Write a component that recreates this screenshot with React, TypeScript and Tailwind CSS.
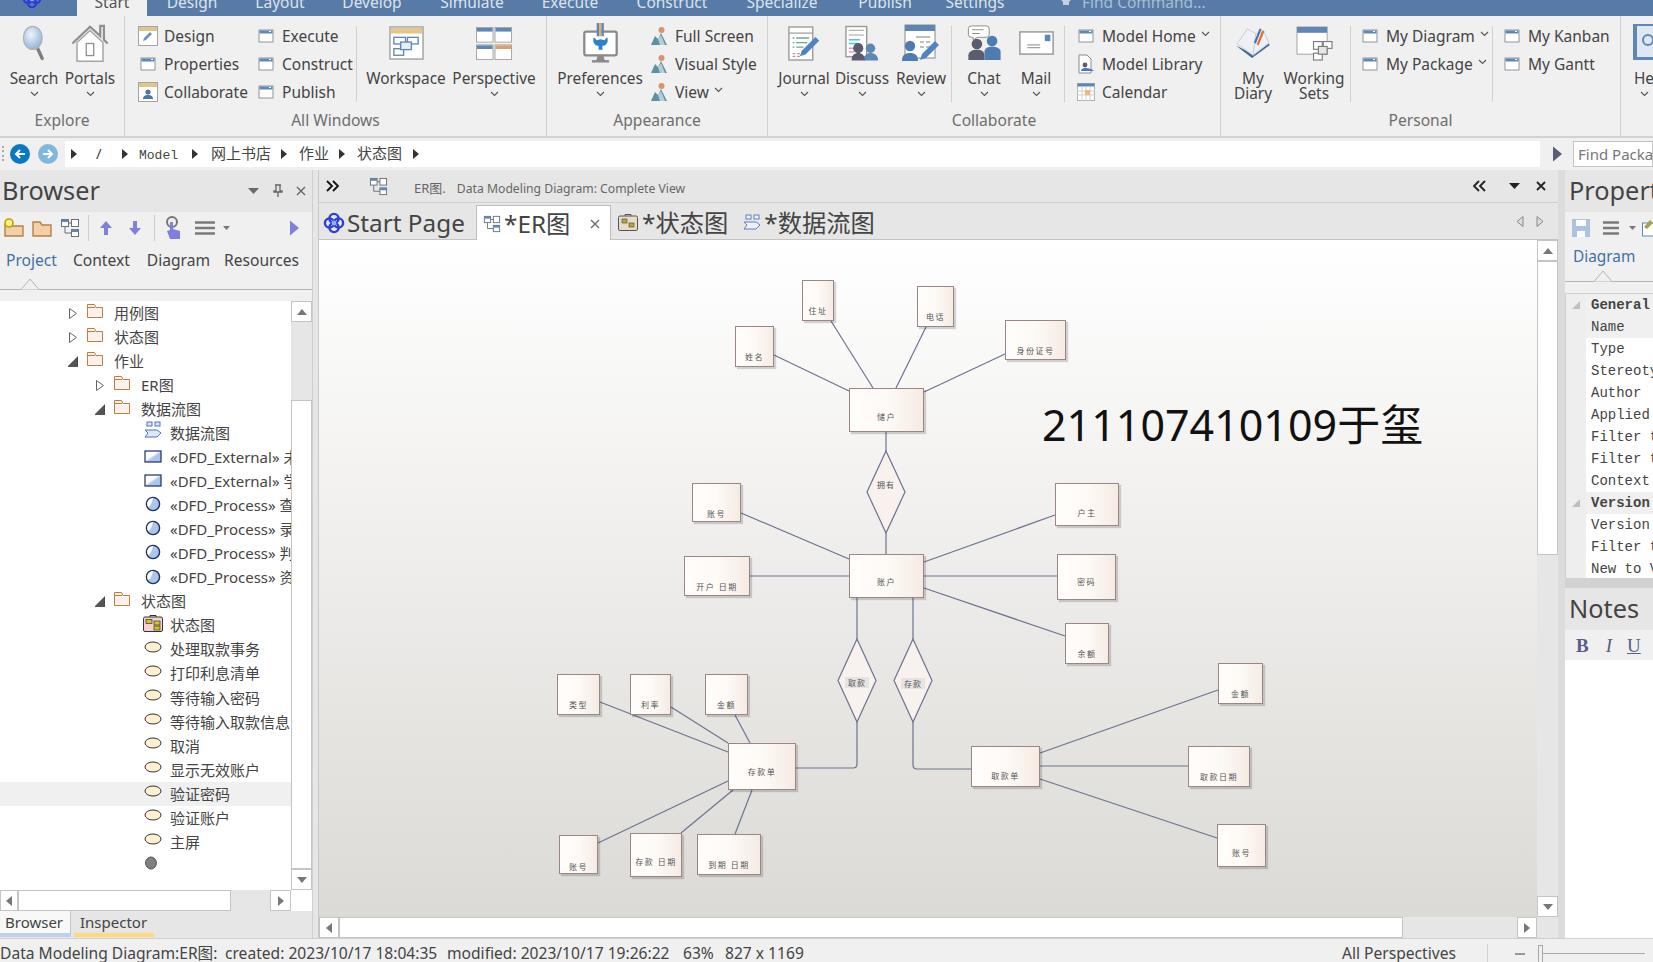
import { ReactNode } from "react";

/* ---------- small icons ---------- */

function Win() {
  return (
    <svg width="16" height="14" viewBox="0 0 16 14" className="shrink-0">
      <rect x="1" y="1" width="14" height="12" fill="#fff" stroke="#8d939b" />
      <rect x="1.5" y="1.5" width="13" height="3" fill="#5f87b5" />
      <rect x="11" y="2" width="2" height="1" fill="#fff" />
    </svg>
  );
}

function TanWin({ kind }: { kind: "pen" | "user" }) {
  return (
    <svg width="20" height="20" viewBox="0 0 20 20" className="shrink-0">
      <rect x="0.5" y="0.5" width="19" height="19" fill="#fff" stroke="#a3a3a3" />
      <rect x="1" y="1" width="18" height="4" fill="#e3c68e" />
      {kind === "pen" ? (
        <path d="M5 15l1-3 6-6 2 2-6 6z" fill="#6f93c4" />
      ) : (
        <>
          <circle cx="10" cy="10" r="2.6" fill="#4e74a8" />
          <path d="M5 17c0-3 2-4 5-4s5 1 5 4z" fill="#4e74a8" />
        </>
      )}
    </svg>
  );
}

function People() {
  return (
    <svg width="17" height="20" viewBox="0 0 17 20" className="shrink-0">
      <circle cx="10.5" cy="4" r="3" fill="#d8936a" />
      <path d="M0 19l4-9 3 3 3-6 6 12z" fill="#5b93a5" />
      <path d="M7 13l3-4 4 10H9z" fill="#fff" opacity="0.55" />
    </svg>
  );
}

function Chev() {
  return (
    <svg width="9" height="6" viewBox="0 0 9 6" className="shrink-0">
      <path d="M1 1l3.5 3.5L8 1" fill="none" stroke="#555" strokeWidth="1.1" />
    </svg>
  );
}

function Tri({ color = "#333", w = 6, h = 10 }: { color?: string; w?: number; h?: number }) {
  return (
    <svg width={w} height={h} viewBox="0 0 6 10" className="shrink-0">
      <path d="M0 0l6 5-6 5z" fill={color} />
    </svg>
  );
}

function Diagram({ size = 20, band = "#5f87b5" }: { size?: number; band?: string }) {
  return (
    <svg width={size} height={size} viewBox="0 0 20 20" className="shrink-0">
      <g fill="#fff" stroke="#6b6f78">
        <rect x="1.5" y="1.5" width="7" height="7" />
        <rect x="11.5" y="1.5" width="7" height="7" />
        <rect x="11.5" y="11.5" width="7" height="7" />
        <path d="M8.5 5h3M5 8.5V15h6.5" fill="none" />
      </g>
      <rect x="1.5" y="1.5" width="7" height="2.5" fill={band} />
      <rect x="11.5" y="11.5" width="7" height="2.5" fill={band} />
    </svg>
  );
}

function Logo({ size = 22 }: { size?: number }) {
  return (
    <svg width={size} height={size} viewBox="0 0 22 22" className="shrink-0">
      <g fill="none" stroke="#2b3fd6" strokeWidth="2.4">
        <circle cx="11" cy="6.5" r="4.6" />
        <circle cx="15.5" cy="11" r="4.6" />
        <circle cx="11" cy="15.5" r="4.6" />
        <circle cx="6.5" cy="11" r="4.6" />
      </g>
      <circle cx="11" cy="11" r="2.4" fill="#8fb0f0" />
    </svg>
  );
}

/* ---------- big ribbon icons ---------- */

const big: Record<string, ReactNode> = {
  search: (
    <svg width="29" height="36" viewBox="0 0 34 42">
      <defs>
        <radialGradient id="lens" cx="0.4" cy="0.35" r="0.7">
          <stop offset="0" stopColor="#eef5fc" />
          <stop offset="1" stopColor="#8fb2d6" />
        </radialGradient>
      </defs>
      <path d="M20 26l6 13" stroke="#7d7d7d" strokeWidth="4" strokeLinecap="round" />
      <ellipse cx="15" cy="15" rx="11" ry="13.5" fill="url(#lens)" stroke="#aab4bd" strokeWidth="1.5" />
    </svg>
  ),
  house: (
    <svg width="38" height="39" viewBox="0 0 40 42">
      <path d="M6 20v20h28V20L20 7z" fill="#fff" stroke="#a5a5a5" strokeWidth="1.6" />
      <path d="M1 21L20 3l11 10V2h4v15l4 4" fill="none" stroke="#8f8f8f" strokeWidth="2.4" />
      <rect x="16" y="21" width="8" height="13" fill="#fff" stroke="#8f8f8f" strokeWidth="1.4" />
    </svg>
  ),
  workspace: (
    <svg width="35" height="34" viewBox="0 0 36 36" preserveAspectRatio="none">
      <rect x="1" y="1" width="34" height="34" fill="#fff" stroke="#a3a3a3" strokeWidth="1.5" />
      <rect x="2" y="2" width="32" height="6" fill="#e3c68e" />
      <g fill="#fff" stroke="#5f87b5" strokeWidth="1.4">
        <rect x="5" y="12" width="12" height="7" />
        <rect x="19" y="12" width="11" height="7" />
        <rect x="5" y="24" width="10" height="7" />
        <rect x="12" y="17" width="11" height="8" fill="#e9eef5" />
      </g>
    </svg>
  ),
  perspective: (
    <svg width="37" height="33" viewBox="0 0 38 36" preserveAspectRatio="none">
      <g fill="#fff" stroke="#a5a5a5">
        <rect x="0.5" y="0.5" width="17" height="16" />
        <rect x="19.5" y="0.5" width="17" height="16" />
        <rect x="0.5" y="19.5" width="17" height="16" />
        <rect x="19.5" y="19.5" width="17" height="16" />
      </g>
      <rect x="1" y="1" width="16" height="4" fill="#5f87b5" />
      <rect x="20" y="1" width="16" height="4" fill="#5f87b5" />
      <rect x="1" y="20" width="16" height="4" fill="#5f87b5" />
      <rect x="20" y="20" width="16" height="4" fill="#d9a06b" />
    </svg>
  ),
  prefs: (
    <svg width="35" height="40" viewBox="0 0 36 42">
      <rect x="1" y="9" width="34" height="25" rx="2" fill="#fff" stroke="#8a8a8a" strokeWidth="2.4" />
      <path d="M13 41h10l-2-7h-6z" fill="#8a8a8a" />
      <rect x="9" y="39" width="18" height="2.5" fill="#8a8a8a" />
      <rect x="14" y="0" width="2.5" height="14" fill="#5f87b5" />
      <rect x="16.5" y="0" width="2.5" height="14" fill="#e0b060" />
      <rect x="19" y="0" width="2.5" height="14" fill="#5f87b5" />
      <path d="M11 15c-2 5 1 9 5 9v4h4v-4c4 0 7-4 5-9l-3 3-4-1-4 1z" fill="#2b7fd0" />
    </svg>
  ),
  journal: (
    <svg width="33" height="35" viewBox="0 0 36 38">
      <rect x="1" y="1" width="26" height="36" fill="#fff" stroke="#9a9a9a" strokeWidth="1.5" />
      <rect x="1.5" y="7" width="25" height="1.3" fill="#9a9a9a" />
      <path d="M5 13h2m2 0h14M5 18h2m2 0h12M5 23h2m2 0h8" stroke="#6fa58f" strokeWidth="1.4" />
      <path d="M5 30h3m2 0h3m2 0h3M5 33h3m2 0h3" stroke="#c98f8f" strokeWidth="1.4" />
      <path d="M13 33l2-6 15-15 4 4-15 15z" fill="#4e84c4" />
    </svg>
  ),
  discuss: (
    <svg width="34" height="37" viewBox="0 0 36 38">
      <rect x="1" y="1" width="22" height="32" fill="#fff" stroke="#9a9a9a" strokeWidth="1.5" />
      <path d="M4 5h16M4 10h16" stroke="#9a9a9a" />
      <path d="M4 15h12M4 19h10" stroke="#55c6d8" strokeWidth="1.4" />
      <path d="M4 24h6M4 28h6" stroke="#e49ac0" strokeWidth="1.4" />
      <circle cx="27" cy="24" r="5" fill="#5f87b5" />
      <path d="M20 37c0-6 3-8 7-8s8 2 8 8z" fill="#5f87b5" />
      <circle cx="14" cy="24" r="5.4" fill="#5c5c70" />
      <path d="M7 37c0-6 3-8 7-8s7 2 7 8z" fill="#5c5c70" />
    </svg>
  ),
  review: (
    <svg width="40" height="38" viewBox="0 0 40 38">
      <rect x="4" y="1" width="30" height="33" fill="#fff" stroke="#9a9a9a" strokeWidth="1.2" />
      <rect x="4" y="1" width="30" height="6" fill="#5f87b5" />
      <path d="M15 13h14M19 18h4m2 0h4M19 23h4m2 0h4" stroke="#a8a8a8" strokeWidth="1.3" />
      <circle cx="9" cy="22" r="5.2" fill="#4e7bb0" />
      <path d="M1 37c0-6 3-8 8-8s8 2 8 8z" fill="#4e7bb0" />
      <path d="M19 36l2-6 13-13 4 4-13 13z" fill="#4e84c4" />
    </svg>
  ),
  chat: (
    <svg width="35" height="36" viewBox="0 0 36 38">
      <path d="M4 1h16a3 3 0 013 3v6a3 3 0 01-3 3H10l-4 3v-3H4a3 3 0 01-3-3V4a3 3 0 013-3z" fill="#fff" stroke="#8a8a8a" />
      <path d="M5 5h12M5 9h8" stroke="#8a8a8a" />
      <circle cx="10" cy="20" r="5.6" fill="#5c5c70" />
      <path d="M1 37V32c0-4 4-6 9-6s8 2 8 6v5z" fill="#5c5c70" />
      <circle cx="26" cy="17" r="5.6" fill="#4e7bb0" />
      <path d="M18 37V28c0-3 3-5 8-5s9 2 9 5v9z" fill="#4e7bb0" />
    </svg>
  ),
  mail: (
    <svg width="37" height="24" viewBox="0 0 38 26">
      <rect x="1" y="1" width="36" height="24" fill="#fff" stroke="#9a9a9a" strokeWidth="1.6" />
      <rect x="28" y="4" width="6" height="7" fill="#5f87b5" />
      <path d="M9 15h14M9 18h14" stroke="#a3a3a3" strokeWidth="1.4" />
    </svg>
  ),
  diary: (
    <svg width="38" height="32" viewBox="0 0 38 34">
      <path d="M1 20l17 13 19-14-3-3-16 12z" fill="#3c6c9c" />
      <path d="M2 18L13 2l9 5 9-1 5 11-17 13z" fill="#eef0f6" stroke="#c9cbd8" />
      <path d="M22 7l-3 23" stroke="#c4c7d6" />
      <path d="M24 19l6-15" stroke="#d9733a" strokeWidth="2.4" />
      <path d="M21 17l6-15" stroke="#4a6ea8" strokeWidth="2.2" />
    </svg>
  ),
  sets: (
    <svg width="37" height="35" viewBox="0 0 38 36">
      <rect x="1" y="1" width="31" height="28" fill="#fff" stroke="#a3a3a3" />
      <rect x="1" y="1" width="31" height="6" fill="#5f87b5" />
      <g fill="#fff" stroke="#7d7d7d" strokeWidth="1.2">
        <rect x="18" y="16" width="9" height="8" />
        <rect x="28" y="16" width="9" height="7" />
        <rect x="18" y="28" width="9" height="7" />
        <rect x="23" y="21" width="9" height="8" fill="#e6e6e6" />
      </g>
    </svg>
  ),
  help: (
    <svg width="22" height="38" viewBox="0 0 22 38">
      <path d="M0 0h22v36H0z" fill="#5f87b5" />
      <rect x="4" y="2" width="18" height="31" fill="#dfe8f2" />
      <circle cx="15" cy="16" r="5" fill="none" stroke="#5f87b5" strokeWidth="2" />
    </svg>
  ),
};

/* ---------- ribbon ---------- */

function BigBtn({
  icon,
  label,
  width,
  chev = true,
}: {
  icon: string;
  label: ReactNode;
  width: string;
  chev?: boolean;
}) {
  return (
    <div className={`flex shrink-0 flex-col items-center pt-[7px] ${width}`}>
      <div className="flex h-10 items-center justify-center">{big[icon]}</div>
      <div className="mt-[5px] min-h-5 pt-[3px] text-center text-[15.4px] leading-[15px] whitespace-nowrap text-[#444]">{label}</div>
      {chev && (
        <div className="mt-[3px]">
          <Chev />
        </div>
      )}
    </div>
  );
}

function SmallBtn({ icon, text, chev }: { icon: ReactNode; text: string; chev?: boolean }) {
  return (
    <div className="flex h-7 items-center">
      <div className="flex w-5 shrink-0 justify-center">{icon}</div>
      <span className="ml-[6px] pt-[2px] text-[15.5px] whitespace-nowrap text-[#444]">{text}</span>
      {chev && (
        <span className="-mt-[5px] ml-[5px]">
          <Chev />
        </span>
      )}
    </div>
  );
}

function Col({ width, children }: { width: string; children: ReactNode }) {
  return <div className={`flex shrink-0 flex-col pt-[6px] ${width}`}>{children}</div>;
}

function Sep() {
  return <div className="mt-[10px] h-[76px] w-px shrink-0 bg-[#d0d0d0]" />;
}

function Group({
  width,
  title,
  children,
}: {
  width: string;
  title: string;
  children: ReactNode;
}) {
  return (
    <div className={`flex h-[120px] shrink-0 flex-col border-r border-[#d0d0d0] ${width}`}>
      <div className="flex h-[94px] items-start">{children}</div>
      <div className="h-5 text-center text-[15.6px] leading-5 whitespace-nowrap text-[#6e6e6e]">{title}</div>
    </div>
  );
}

function Ribbon() {
  return (
    <div className="flex h-[122px] shrink-0 border-b-2 border-[#d2d2d2] bg-[#f0f0f0]">
      <Group width="w-[125px]" title="Explore">
        <div className="w-[6px] shrink-0" />
        <BigBtn icon="search" label="Search" width="w-14" />
        <BigBtn icon="house" label="Portals" width="w-14" />
      </Group>
      <Group width="w-[422px]" title="All Windows">
        <div className="w-[13px] shrink-0" />
        <Col width="w-[118px]">
          <SmallBtn icon={<TanWin kind="pen" />} text="Design" />
          <SmallBtn icon={<Win />} text="Properties" />
          <SmallBtn icon={<TanWin kind="user" />} text="Collaborate" />
        </Col>
        <Col width="w-[100px]">
          <SmallBtn icon={<Win />} text="Execute" />
          <SmallBtn icon={<Win />} text="Construct" />
          <SmallBtn icon={<Win />} text="Publish" />
        </Col>
        <Sep />
        <div className="w-[7px] shrink-0" />
        <BigBtn icon="workspace" label="Workspace" width="w-[84px]" chev={false} />
        <BigBtn icon="perspective" label="Perspective" width="w-[92px]" />
      </Group>
      <Group width="w-[221px]" title="Appearance">
        <div className="w-3 shrink-0" />
        <BigBtn icon="prefs" label="Preferences" width="w-[82px]" />
        <div className="w-[8px] shrink-0" />
        <Col width="w-[110px]">
          <SmallBtn icon={<People />} text="Full Screen" />
          <SmallBtn icon={<People />} text="Visual Style" />
          <SmallBtn icon={<People />} text="View" chev />
        </Col>
      </Group>
      <Group width="w-[453px]" title="Collaborate">
        <div className="w-[7px] shrink-0" />
        <BigBtn icon="journal" label="Journal" width="w-[58px]" />
        <BigBtn icon="discuss" label="Discuss" width="w-[58px]" />
        <BigBtn icon="review" label="Review" width="w-[60px]" />
        <Sep />
        <div className="w-[6px] shrink-0" />
        <BigBtn icon="chat" label="Chat" width="w-[52px]" />
        <BigBtn icon="mail" label="Mail" width="w-[52px]" />
        <div className="w-[2px] shrink-0" />
        <Sep />
        <div className="w-[11px] shrink-0" />
        <Col width="w-[130px]">
          <SmallBtn icon={<Win />} text="Model Home" chev />
          <SmallBtn
            icon={
              <svg width="18" height="20" viewBox="0 0 18 20">
                <path d="M2 1h8l4 4v14H2z" fill="#fff" stroke="#8a8a8a" />
                <circle cx="8" cy="11" r="2.4" fill="#5c5c70" />
                <path d="M4 17c0-2 2-3 4-3s6 0 9 3z" fill="#4e7bb0" />
              </svg>
            }
            text="Model Library"
          />
          <SmallBtn
            icon={
              <svg width="18" height="18" viewBox="0 0 18 18">
                <rect x="0.5" y="0.5" width="17" height="17" fill="#fff" stroke="#b0b0b0" />
                <rect x="0.5" y="0.5" width="17" height="3" fill="#5f87b5" />
                <path d="M0 8h18M0 12h18M5 4v14M9 4v14M13 4v14" stroke="#d0d0d0" />
                <rect x="8" y="7" width="5" height="5" fill="#f0b878" />
              </svg>
            }
            text="Calendar"
          />
        </Col>
      </Group>
      <Group width="w-[400px]" title="Personal">
        <div className="w-[4px] shrink-0" />
        <BigBtn icon="diary" label={<>My<br />Diary</>} width="w-14" chev={false} />
        <BigBtn icon="sets" label={<>Working<br />Sets</>} width="w-[66px]" chev={false} />
        <div className="w-[3px] shrink-0" />
        <Sep />
        <div className="w-[9px] shrink-0" />
        <Col width="w-[130px]">
          <SmallBtn icon={<Win />} text="My Diagram" chev />
          <SmallBtn icon={<Win />} text="My Package" chev />
        </Col>
        <div className="ml-[2px]">
          <Sep />
        </div>
        <div className="w-[9px] shrink-0" />
        <Col width="w-[120px]">
          <SmallBtn icon={<Win />} text="My Kanban" />
          <SmallBtn icon={<Win />} text="My Gantt" />
        </Col>
      </Group>
      <div className="pl-[16px]">
        <BigBtn icon="help" label="He" width="w-[14px]" />
      </div>
    </div>
  );
}

function TitleBar() {
  const tabs = [
    ["Design", "w-[90px]"],
    ["Layout", "w-[86px]"],
    ["Develop", "w-[98px]"],
    ["Simulate", "w-[102px]"],
    ["Execute", "w-[94px]"],
    ["Construct", "w-[110px]"],
    ["Specialize", "w-[110px]"],
    ["Publish", "w-[96px]"],
    ["Settings", "w-[84px]"],
  ];
  return (
    <div className="flex h-4 shrink-0 items-start overflow-hidden bg-[#577ba6] text-[15.5px] leading-5">
      <div className="-mt-[11px] flex w-[77px] justify-center pr-[14px]">
        <Logo size={20} />
      </div>
      <div className="-mt-[8px] h-[30px] w-[70px] bg-[#f0f0f0] text-center text-[#555]">Start</div>
      {tabs.map(([t, w]) => (
        <div key={t} className={`-mt-[8px] text-center text-[#dbe4ee] ${w}`}>
          {t}
        </div>
      ))}
      <div className="-mt-[8px] flex items-center pl-[43px] text-[#a9bdd3]">
        <svg width="12" height="20" viewBox="0 0 12 20">
          <path d="M6 0a5 5 0 00-3 9v3h6V9a5 5 0 00-3-9z" transform="translate(0 1)" fill="#c2d0e0" />
        </svg>
        <span className="ml-[10px]">Find Command...</span>
      </div>
    </div>
  );
}

function Crumb({ pad, width, children }: { pad: string; width: string; children: ReactNode }) {
  return (
    <>
      <Tri />
      <div className={`shrink-0 whitespace-nowrap ${pad} ${width}`}>{children}</div>
    </>
  );
}

function Breadcrumb() {
  return (
    <div className="flex h-[29px] shrink-0 items-center bg-[#f0f0f0] pt-[2px]">
      <div className="ml-[2px] flex h-4 w-[3px] flex-col justify-between">
        <i className="h-[2px] w-[2px] bg-[#aaa]" />
        <i className="h-[2px] w-[2px] bg-[#aaa]" />
        <i className="h-[2px] w-[2px] bg-[#aaa]" />
        <i className="h-[2px] w-[2px] bg-[#aaa]" />
      </div>
      <svg width="20" height="20" viewBox="0 0 20 20" className="ml-[5px]">
        <circle cx="10" cy="10" r="10" fill="#0a78c2" />
        <path d="M15 10H6m4-4l-4 4 4 4" fill="none" stroke="#fff" strokeWidth="2" />
      </svg>
      <svg width="20" height="20" viewBox="0 0 20 20" className="ml-[8px]">
        <circle cx="10" cy="10" r="10" fill="#7fb8dc" />
        <path d="M5 10h9m-4-4l4 4-4 4" fill="none" stroke="#fff" strokeWidth="2" />
      </svg>
      <div className="ml-[7px] flex h-[26px] w-[1475px] shrink-0 items-center bg-white pl-[6px] text-[15px] text-[#444]">
        <Crumb pad="pl-[19px]" width="w-[45px]">/</Crumb>
        <Crumb pad="pl-[11px]" width="w-[64px]">
          <span className="font-['Liberation_Mono',monospace] text-[13px]">Model</span>
        </Crumb>
        <Crumb pad="pl-[13px]" width="w-[83px]">网上书店</Crumb>
        <Crumb pad="pl-[12px]" width="w-[52px]">作业</Crumb>
        <Crumb pad="pl-[12px]" width="w-[68px]">状态图</Crumb>
        <Tri />
      </div>
      <div className="ml-[13px]">
        <Tri color="#5a5d78" w={9} h={16} />
      </div>
      <div className="ml-[11px] h-[26px] flex-1 overflow-hidden border border-[#c4c4c4] bg-white pl-[4px] text-[15px] leading-6 whitespace-nowrap text-[#777]">
        Find Package
      </div>
    </div>
  );
}

/* ---------- left browser panel ---------- */

function Folder({ fill = "#fdf1ea" }: { fill?: string }) {
  return (
    <svg width="16" height="15" viewBox="0 0 16 15" className="shrink-0 -translate-y-[3px]">
      <path d="M.5 14.5v-13h7l1.5 3h6.5v10z" fill={fill} stroke="#b97f45" />
      <path d="M1 4.5h7" stroke="#b97f45" />
    </svg>
  );
}

const leafIcons: Record<string, ReactNode> = {
  flow: (
    <svg width="18" height="18" viewBox="0 0 18 18" className="-translate-y-[3px]">
      <g fill="#dfe8f7" stroke="#4d6fc0">
        <rect x="3" y="1" width="5" height="4" />
        <rect x="11" y="1" width="5" height="4" />
        <path d="M1 9h12l4 3-4 4H1l3-4z" />
      </g>
    </svg>
  ),
  ext: (
    <svg width="18" height="13" viewBox="0 0 18 13" className="-translate-y-[1px]">
      <defs>
        <linearGradient id="ex" x1="0" y1="0" x2="1" y2="1">
          <stop offset="0.42" stopColor="#fff" />
          <stop offset="0.58" stopColor="#a9c6ee" />
        </linearGradient>
      </defs>
      <rect x="1" y="1" width="16" height="11" fill="url(#ex)" stroke="#1f2f5a" strokeWidth="1.2" />
    </svg>
  ),
  proc: (
    <svg width="16" height="16" viewBox="0 0 16 16" className="-translate-y-[1px]">
      <circle cx="8" cy="8" r="6.6" fill="#a9c6ee" stroke="#1f2f5a" strokeWidth="1.4" />
      <path d="M8 2a6 6 0 00-5 9c3-1 4-5 5-9z" fill="#fff" />
    </svg>
  ),
  state: (
    <svg width="20" height="17" viewBox="0 0 20 17" className="-translate-y-[2px]">
      <rect x="0.5" y="2" width="19" height="14.5" rx="1.5" fill="#f6d3d3" stroke="#333" />
      <path d="M7 2V.5h6V2" fill="none" stroke="#333" />
      <rect x="3" y="4.5" width="6" height="4" fill="#d4c42a" stroke="#333" strokeWidth="0.7" />
      <rect x="11" y="6" width="6" height="4" fill="#d4c42a" stroke="#333" strokeWidth="0.7" />
      <rect x="11" y="11" width="6" height="4" fill="#d4c42a" stroke="#333" strokeWidth="0.7" />
    </svg>
  ),
  oval: (
    <svg width="18" height="12" viewBox="0 0 18 12" className="-translate-y-[3px]">
      <ellipse cx="9" cy="6" rx="8" ry="5" fill="#fdf0d0" stroke="#333" />
    </svg>
  ),
  dot: (
    <svg width="18" height="14" viewBox="0 0 18 14" className="-translate-y-[3px] -translate-x-[2px]">
      <ellipse cx="9" cy="7" rx="5.4" ry="6" fill="#808080" stroke="#555" />
    </svg>
  ),
};

type Row = { text: string; level: 0 | 1 | 2; open?: boolean; icon?: string; active?: boolean };

const rows: Row[] = [
  { text: "用例图", level: 0 },
  { text: "状态图", level: 0 },
  { text: "作业", level: 0, open: true },
  { text: "ER图", level: 1 },
  { text: "数据流图", level: 1, open: true },
  { text: "数据流图", level: 2, icon: "flow" },
  { text: "«DFD_External» 未注册用户", level: 2, icon: "ext" },
  { text: "«DFD_External» 学生用户", level: 2, icon: "ext" },
  { text: "«DFD_Process» 查询", level: 2, icon: "proc" },
  { text: "«DFD_Process» 录入", level: 2, icon: "proc" },
  { text: "«DFD_Process» 判断", level: 2, icon: "proc" },
  { text: "«DFD_Process» 资料", level: 2, icon: "proc" },
  { text: "状态图", level: 1, open: true },
  { text: "状态图", level: 2, icon: "state" },
  { text: "处理取款事务", level: 2, icon: "oval" },
  { text: "打印利息清单", level: 2, icon: "oval" },
  { text: "等待输入密码", level: 2, icon: "oval" },
  { text: "等待输入取款信息", level: 2, icon: "oval" },
  { text: "取消", level: 2, icon: "oval" },
  { text: "显示无效账户", level: 2, icon: "oval" },
  { text: "验证密码", level: 2, icon: "oval", active: true },
  { text: "验证账户", level: 2, icon: "oval" },
  { text: "主屏", level: 2, icon: "oval" },
  { text: "", level: 2, icon: "dot" },
];

function Twisty({ open }: { open?: boolean }) {
  return (
    <svg width="10" height="11" viewBox="0 0 10 11" className="shrink-0">
      {open ? (
        <path d="M0 10.5h10V.5z" fill="#555" stroke="#222" strokeWidth="0.6" />
      ) : (
        <path d="M1.5.5l7 5-7 5z" fill="#fff" stroke="#666" />
      )}
    </svg>
  );
}

function TreeRow({ row }: { row: Row }) {
  const pad = { 0: "pl-[68px]", 1: "pl-[95px]", 2: "pl-[143px]" }[row.level];
  return (
    <div
      className={`flex h-[24.05px] w-[291px] items-center overflow-hidden whitespace-nowrap text-[15px] text-[#444] ${pad} ${
        row.active ? "bg-[#f0f0f0]" : ""
      }`}
    >
      {row.level === 2 ? (
        <>
          <div className="flex w-[20px] shrink-0 justify-center">{row.icon ? leafIcons[row.icon] : null}</div>
          <span className="ml-[7px]">{row.text}</span>
        </>
      ) : (
        <>
          <Twisty open={row.open} />
          <span className="ml-[9px]">
            <Folder />
          </span>
          <span className="ml-[11px]">{row.text}</span>
        </>
      )}
    </div>
  );
}

function ScrollBtn({ dir, className = "" }: { dir: "up" | "down" | "left" | "right"; className?: string }) {
  const d = { up: "M1 9L6 3l5 6z", down: "M1 3l5 6 5-6z", left: "M9 1L3 6l6 5z", right: "M3 1l6 5-6 5z" }[dir];
  return (
    <div className={`flex shrink-0 items-center justify-center border border-[#c4c4c4] bg-white ${className}`}>
      <svg width="12" height="12" viewBox="0 0 12 12">
        <path d={d} fill="#777" />
      </svg>
    </div>
  );
}

function PaneHead({ title, pad = "ml-[2px]", right }: { title: string; pad?: string; right?: ReactNode }) {
  return (
    <div className="flex h-[42px] shrink-0 items-center overflow-hidden bg-[#e6e6e6]">
      <span className={`text-[25.3px] whitespace-nowrap text-[#444] ${pad}`}>{title}</span>
      {right}
    </div>
  );
}

function Menu() {
  return (
    <svg width="20" height="14" viewBox="0 0 20 14" className="shrink-0">
      <path d="M0 1.5h20M0 7h20M0 12.5h20" stroke="#7a7a7a" strokeWidth="2.4" />
    </svg>
  );
}

function MiniDown() {
  return (
    <svg width="7" height="4" viewBox="0 0 7 4" className="shrink-0">
      <path d="M0 0h7L3.5 4z" fill="#777" />
    </svg>
  );
}

function Notch({ left }: { left: string }) {
  return (
    <svg width="20" height="12" viewBox="0 0 20 12" className={`absolute -bottom-px ${left}`}>
      <path d="M0 11.5h1L10 1l9 10.5h1" fill="#f0f0f0" stroke="#b5b5b5" />
    </svg>
  );
}

function Browser() {
  return (
    <div className="flex w-[312px] shrink-0 flex-col">
      <PaneHead
        title="Browser"
        right={
          <div className="ml-[148px] flex items-center">
            <svg width="11" height="6" viewBox="0 0 11 6">
              <path d="M0 0h11L5.5 6z" fill="#6a6a6a" />
            </svg>
            <svg width="12" height="14" viewBox="0 0 12 14" className="ml-[13px]">
              <path d="M3 1h6M4 1v6H2v1h8V7H8V1M6 8v5" fill="none" stroke="#666" strokeWidth="1.3" />
            </svg>
            <svg width="10" height="10" viewBox="0 0 10 10" className="ml-[12px]">
              <path d="M1 1l8 8M9 1l-8 8" stroke="#666" strokeWidth="1.4" />
            </svg>
          </div>
        }
      />
      <div className="flex h-[31px] shrink-0 items-center bg-[#f0f0f0] pl-[4px]">
        <svg width="20" height="20" viewBox="0 0 20 20">
          <path d="M1 18V6h6l1.5 2H19v10z" fill="#f2cfa6" stroke="#b97f45" strokeWidth="1.4" />
          <circle cx="5" cy="5" r="4" fill="#f7f28a" stroke="#c2a000" strokeWidth="1.6" />
        </svg>
        <svg width="20" height="18" viewBox="0 0 20 18" className="ml-[8px]">
          <path d="M1 17V3h7l2 3h9v11z" fill="#f2cfa6" stroke="#b97f45" strokeWidth="1.4" />
        </svg>
        <div className="ml-[8px]">
          <Diagram />
        </div>
        <div className="ml-[8px] h-[26px] w-px bg-[#ccc]" />
        <svg width="14" height="16" viewBox="0 0 14 16" className="ml-[10px]">
          <path d="M7 1l6 7H9v7H5V8H1z" fill="#7f7fdf" />
        </svg>
        <svg width="14" height="16" viewBox="0 0 14 16" className="ml-[15px]">
          <path d="M7 15L1 8h4V1h4v7h4z" fill="#7f7fdf" />
        </svg>
        <div className="ml-[12px] h-[26px] w-px bg-[#ccc]" />
        <svg width="16" height="24" viewBox="0 0 16 24" className="ml-[10px]">
          <circle cx="7" cy="6" r="5" fill="none" stroke="#777" strokeWidth="2" />
          <path d="M5 6v8l-3 1 3 8h10v-8l-7-2V6z" fill="#7f7fdf" />
        </svg>
        <div className="ml-[14px]">
          <Menu />
        </div>
        <div className="ml-[8px]">
          <MiniDown />
        </div>
        <div className="ml-[60px]">
          <Tri color="#7f7fdf" w={9} h={16} />
        </div>
      </div>
      <div className="relative flex h-[47px] shrink-0 items-start border-b border-[#b5b5b5] bg-[#f0f0f0] pt-[6px] text-[15.6px] text-[#444]">
        <span className="ml-[6px] text-[#3f70a6]">Project</span>
        <span className="ml-[16px]">Context</span>
        <span className="ml-[17px]">Diagram</span>
        <span className="ml-[14px]">Resources</span>
        <Notch left="left-[20px]" />
      </div>
      <div className="h-[11px] shrink-0 bg-[#f0f0f0]" />
      <div className="flex h-[589px] shrink-0 bg-white">
        <div className="w-[291px] shrink-0">
          {rows.map((r, i) => (
            <TreeRow key={i} row={r} />
          ))}
        </div>
        <div className="flex w-[21px] shrink-0 flex-col bg-[#e6e6e6]">
          <ScrollBtn dir="up" className="h-[21px]" />
          <div className="h-[78px]" />
          <div className="flex-1 border border-[#c4c4c4] bg-white" />
          <ScrollBtn dir="down" className="h-[21px]" />
        </div>
      </div>
      <div className="flex h-[21px] shrink-0 bg-[#e6e6e6]">
        <ScrollBtn dir="left" className="w-[18px]" />
        <div className="w-[213px] border border-[#c4c4c4] bg-white" />
        <div className="w-[39px]" />
        <ScrollBtn dir="right" className="w-[21px]" />
        <div className="flex-1 bg-white" />
      </div>
      <div className="flex h-[27px] shrink-0 items-start bg-[#e6e6e6] text-[15px] leading-[20px] text-[#444]">
        <div className="h-[26px] w-[71px] border-r border-b-[4px] border-r-[#c4c4c4] border-b-[#c0d0f0] bg-[#f8f8f8] pl-[5px] pt-px">Browser</div>
        <div className="ml-[3px] h-[26px] w-[80px] border-b-[4px] border-[#ffd878] pl-[6px] pt-px">Inspector</div>
      </div>
    </div>
  );
}

/* ---------- diagram ---------- */

// page coordinates, shifted by the canvas origin when drawn
const OX = 319;
const OY = 239;

const nodes = [
  { x: 802, y: 279, w: 32, h: 41, t: "住址", ly: 310 },
  { x: 917, y: 285, w: 37, h: 41, t: "电话", ly: 316 },
  { x: 1005, y: 319, w: 61, h: 40, t: "身份证号", ly: 350 },
  { x: 735, y: 325, w: 39, h: 41, t: "姓名", ly: 356 },
  { x: 849, y: 387, w: 75, h: 44, t: "储户", ly: 416 },
  { x: 692, y: 482, w: 49, h: 39, t: "账号", ly: 513 },
  { x: 684, y: 555, w: 66, h: 40, t: "开户 日期", ly: 586 },
  { x: 849, y: 553, w: 75, h: 44, t: "账户", ly: 581 },
  { x: 1055, y: 482, w: 64, h: 43, t: "户主", ly: 512 },
  { x: 1057, y: 553, w: 59, h: 46, t: "密码", ly: 581 },
  { x: 1065, y: 622, w: 44, h: 41, t: "余额", ly: 653 },
  { x: 557, y: 673, w: 43, h: 41, t: "类型", ly: 704 },
  { x: 630, y: 673, w: 41, h: 41, t: "利率", ly: 704 },
  { x: 705, y: 673, w: 43, h: 41, t: "金额", ly: 704 },
  { x: 728, y: 742, w: 68, h: 47, t: "存款单", ly: 771 },
  { x: 971, y: 745, w: 69, h: 41, t: "取款单", ly: 775 },
  { x: 1188, y: 745, w: 62, h: 41, t: "取款日期", ly: 776 },
  { x: 1218, y: 662, w: 45, h: 41, t: "金额", ly: 693 },
  { x: 1217, y: 823, w: 49, h: 43, t: "账号", ly: 852 },
  { x: 559, y: 834, w: 39, h: 39, t: "账号", ly: 866 },
  { x: 630, y: 832, w: 52, h: 44, t: "存款 日期", ly: 861 },
  { x: 697, y: 833, w: 64, h: 41, t: "到期 日期", ly: 864 },
];

const links = [
  [774, 354, 849, 390],
  [831, 320, 873, 387],
  [926, 326, 896, 387],
  [1005, 353, 924, 391],
  [886, 431, 886, 450],
  [886, 532, 886, 553],
  [741, 512, 849, 558],
  [1055, 514, 924, 561],
  [750, 575, 849, 575],
  [924, 575, 1057, 575],
  [924, 587, 1065, 635],
  [857, 597, 857, 638],
  [913, 597, 913, 638],
  [600, 701, 728, 751],
  [671, 706, 728, 742],
  [735, 714, 750, 742],
  [598, 842, 728, 780],
  [681, 832, 733, 789],
  [735, 833, 752, 789],
  [1040, 752, 1218, 689],
  [1040, 765, 1188, 765],
  [1040, 778, 1217, 837],
];

const diamonds = [
  { cx: 886, top: 450, bottom: 532, t: "拥有", ly: 483, chip: false },
  { cx: 857, top: 638, bottom: 721, t: "取款", ly: 681, chip: true },
  { cx: 913, top: 638, bottom: 721, t: "存款", ly: 682, chip: true },
];

function DiagramCanvas() {
  return (
    <div className="relative flex-1 overflow-hidden bg-gradient-to-b from-white to-[#dcdad6]">
      <svg width="1219" height="676" className="absolute left-0 top-0">
        <g stroke="#6c7391" strokeWidth="1.2" fill="none">
          {links.map(([a, b, c, d], i) => (
            <line key={i} x1={a - OX} y1={b - OY} x2={c - OX} y2={d - OY} />
          ))}
          <path d={`M${796 - OX} ${767 - OY}H${853 - OX}q4 0 4-4V${721 - OY}`} />
          <path d={`M${913 - OX} ${721 - OY}V${764 - OY}q0 4 4 4H${971 - OX}`} />
          {diamonds.map((m) => {
            const midY = (m.top + m.bottom) / 2 - OY;
            return (
              <polygon
                key={m.cx}
                fill="#f8f1ed"
                points={`${m.cx - OX},${m.top - OY} ${m.cx + 19 - OX},${midY} ${m.cx - OX},${m.bottom - OY} ${m.cx - 19 - OX},${midY}`}
              />
            );
          })}
        </g>
      </svg>
      {diamonds.map((m) => (
        <span
          key={m.t}
          className={`absolute flex h-[11px] w-[24px] items-center justify-center text-[8px] leading-none tracking-[1px] text-[#555] ${
            m.chip ? "bg-[#e6e4e2]" : ""
          }`}
          style={{ left: m.cx - OX - 12, top: m.ly - OY - 5 }}
        >
          {m.t}
        </span>
      ))}
      {nodes.map((n) => (
        <div
          key={`${n.t}${n.x}`}
          className="absolute border border-[#9b8585] bg-gradient-to-r from-[#fffdfb] via-[#fefaf6] to-[#f5ebe3] shadow-[2px_2px_1px_rgba(0,0,0,0.16)]"
          style={{ left: n.x - OX, top: n.y - OY, width: n.w, height: n.h }}
        >
          <span
            className="absolute inset-x-0 text-center text-[8px] leading-[10px] tracking-[1.5px] whitespace-nowrap text-[#555]"
            style={{ top: n.ly - n.y - 6 }}
          >
            {n.t}
          </span>
        </div>
      ))}
      <span className="absolute left-[723px] top-[158px] text-[43px] leading-[54px] whitespace-nowrap text-[#111]">
        211107410109于玺
      </span>
    </div>
  );
}

function DiagramPane() {
  return (
    <div className="flex w-[1240px] shrink-0 flex-col border-l border-[#c8c8c8]">
      <div className="flex h-[33px] shrink-0 items-center border-b border-[#d0d0d0] bg-[#e6e6e6] pl-[7px]">
        <svg width="14" height="12" viewBox="0 0 14 12">
          <path d="M1 1l5 5-5 5M7 1l5 5-5 5" fill="none" stroke="#111" strokeWidth="1.8" />
        </svg>
        <div className="ml-[29px]">
          <Diagram size={19} />
        </div>
        <span className="ml-[26px] pt-[6px] text-[13px] text-[#666]">ER图.</span>
        <span className="ml-[11px] pt-[6px] text-[12.2px] whitespace-nowrap text-[#666]">Data Modeling Diagram: Complete View</span>
        <div className="ml-auto flex items-center pr-[12px]">
          <svg width="14" height="12" viewBox="0 0 14 12">
            <path d="M7 1L2 6l5 5M13 1L8 6l5 5" fill="none" stroke="#222" strokeWidth="1.8" />
          </svg>
          <svg width="11" height="6" viewBox="0 0 11 6" className="ml-[23px]">
            <path d="M0 0h11L5.5 6z" fill="#222" />
          </svg>
          <svg width="10" height="10" viewBox="0 0 10 10" className="ml-[16px]">
            <path d="M1 1l8 8M9 1l-8 8" stroke="#222" strokeWidth="1.8" />
          </svg>
        </div>
      </div>
      <div className="flex h-[37px] shrink-0 items-end border-b border-[#c4c4c4] bg-[#e6e6e6] text-[24.3px] leading-[34px] text-[#444]">
        <div className="ml-[4px] flex h-[35px] w-[153px] shrink-0 items-center pt-[2px]">
          <Logo />
          <span className="ml-[2px] whitespace-nowrap">Start Page</span>
        </div>
        <div className="-mb-px flex h-[35px] w-[135px] shrink-0 items-center border border-b-0 border-[#bdbdbd] bg-white pl-[6px] pt-px">
          <Diagram size={18} />
          <span className="ml-[3px]">*ER图</span>
          <svg width="10" height="10" viewBox="0 0 10 10" className="ml-[20px]">
            <path d="M1 1l8 8M9 1l-8 8" stroke="#666" strokeWidth="1.3" />
          </svg>
        </div>
        <div className="ml-[7px] flex h-[35px] shrink-0 items-center pt-[2px]">
          <svg width="20" height="17" viewBox="0 0 20 17">
            <rect x="0.5" y="2" width="19" height="14.5" rx="1.5" fill="#e8dcc8" stroke="#555" />
            <path d="M7 2V.5h6V2" fill="none" stroke="#555" />
            <rect x="4" y="5" width="5" height="4" fill="#b4a830" stroke="#444" strokeWidth="0.6" />
            <rect x="11" y="9" width="5" height="4" fill="#b4a830" stroke="#444" strokeWidth="0.6" />
          </svg>
          <span className="ml-[4px] whitespace-nowrap">*状态图</span>
        </div>
        <div className="ml-[15px] flex h-[35px] shrink-0 items-center pt-[2px]">
          <svg width="18" height="17" viewBox="0 0 18 17">
            <g fill="#eef2fa" stroke="#5f7fc8">
              <rect x="3" y="1" width="5" height="4" />
              <rect x="11" y="1" width="5" height="4" />
              <path d="M1 8h12l4 3-4 4H1l3-4z" />
            </g>
          </svg>
          <span className="ml-[3px] whitespace-nowrap">*数据流图</span>
        </div>
        <div className="ml-auto flex h-[35px] items-center pr-[14px]">
          <svg width="8" height="11" viewBox="0 0 8 11">
            <path d="M7 .5L1 5.5l6 5z" fill="#ddd" stroke="#888" />
          </svg>
          <svg width="8" height="11" viewBox="0 0 8 11" className="ml-[12px]">
            <path d="M1 .5l6 5-6 5z" fill="#ddd" stroke="#888" />
          </svg>
        </div>
      </div>
      <div className="flex min-h-0 flex-1">
        <div className="flex min-w-0 flex-1 flex-col">
          <DiagramCanvas />
          <div className="flex h-[21px] shrink-0 bg-[#e6e6e6]">
            <ScrollBtn dir="left" className="w-[20px]" />
            <div className="w-[1064px] border border-[#c4c4c4] bg-white" />
            <div className="flex-1" />
            <ScrollBtn dir="right" className="w-[20px]" />
          </div>
        </div>
        <div className="flex w-[21px] shrink-0 flex-col bg-[#e6e6e6]">
          <ScrollBtn dir="up" className="h-[21px]" />
          <div className="h-[294px] border border-[#c4c4c4] bg-white" />
          <div className="flex-1" />
          <ScrollBtn dir="down" className="h-[21px]" />
          <div className="h-[21px]" />
        </div>
      </div>
    </div>
  );
}

/* ---------- right panes ---------- */

const props: [string, boolean?][] = [
  ["General", true],
  ["Name"],
  ["Type"],
  ["Stereotype"],
  ["Author"],
  ["Applied"],
  ["Filter to"],
  ["Filter to"],
  ["Context"],
  ["Version", true],
  ["Version"],
  ["Filter to"],
  ["New to Version"],
];

function Properties() {
  return (
    <div className="flex w-[88px] shrink-0 flex-col overflow-hidden">
      <PaneHead title="Properties" pad="ml-[4px]" />
      <div className="flex h-[31px] shrink-0 items-center bg-[#f0f0f0] pl-[7px]">
        <svg width="18" height="18" viewBox="0 0 18 18" className="shrink-0">
          <path d="M0 0h18v18H0z" fill="#a9c3e0" />
          <rect x="4" y="1" width="10" height="6" fill="#fff" />
          <rect x="5" y="12" width="8" height="6" fill="#fff" />
        </svg>
        <div className="ml-[13px] w-4">
          <svg width="16" height="14" viewBox="0 0 16 14">
            <path d="M0 1.5h16M0 7h16M0 12.5h16" stroke="#7a7a7a" strokeWidth="2.4" />
          </svg>
        </div>
        <div className="ml-[10px]">
          <MiniDown />
        </div>
        <svg width="12" height="18" viewBox="0 0 12 18" className="ml-[6px] shrink-0">
          <rect x="0.5" y="4" width="11" height="13" fill="#fff" stroke="#5f87b5" />
          <path d="M2 8l6-7 3 3-6 6z" fill="#a8a050" />
        </svg>
      </div>
      <div className="relative flex h-[39px] shrink-0 items-start border-b border-[#b5b5b5] bg-[#f0f0f0] pt-[2px] text-[15.4px] whitespace-nowrap text-[#444]">
        <span className="ml-[8px] text-[#3f70a6]">Diagram</span>
        <span className="ml-[18px]">Connectors</span>
        <Notch left="left-[28px]" />
      </div>
      <div className="h-[11px] shrink-0 bg-[#f0f0f0]" />
      <div className="h-[285px] shrink-0 border-t border-l border-[#d0d0d0] bg-white font-['Liberation_Mono',monospace] text-[14px] leading-[22px] text-[#444]">
        {props.map(([t, head], i) => (
          <div key={i} className="flex h-[22px] items-center whitespace-nowrap">
            <div className="flex h-full w-[20px] shrink-0 items-center justify-center bg-[#eeeeee]">
              {head && (
                <svg width="8" height="8" viewBox="0 0 8 8">
                  <path d="M0 8h8V0z" fill="#c0c0c0" />
                </svg>
              )}
            </div>
            <div className={`h-full flex-1 pl-[5px] ${head ? "bg-[#f0f0f0] font-bold" : i === 1 ? "bg-[#f0f0f0]" : ""}`}>{t}</div>
          </div>
        ))}
      </div>
      <div className="h-[10px] shrink-0 bg-[#d2d2d2]" />
      <PaneHead title="Notes" pad="ml-[4px]" />
      <div className="flex h-[30px] shrink-0 items-center bg-[#f0f0f0] pl-[11px] pt-[3px] font-['Liberation_Serif',serif] text-[19px] text-[#5a5d88]">
        <b>B</b>
        <i className="ml-[17px]">I</i>
        <u className="ml-[15px]">U</u>
      </div>
      <div className="flex-1 bg-white" />
    </div>
  );
}

function StatusBar() {
  return (
    <div className="flex h-6 shrink-0 items-center overflow-hidden border-t border-[#d0d0d0] bg-[#f0f0f0] pt-[6px] text-[15.6px] whitespace-nowrap text-[#444]">
      <span className="w-[225px] shrink-0">Data Modeling Diagram:ER图:</span>
      <span className="w-[222px] shrink-0">created: 2023/10/17 18:04:35</span>
      <span className="w-[236px] shrink-0">modified: 2023/10/17 19:26:22</span>
      <span className="w-[42px] shrink-0">63%</span>
      <span className="w-[617px] shrink-0">827 x 1169</span>
      <span className="w-[145px] shrink-0">All Perspectives</span>
      <div className="h-5 w-px bg-[#d0d0d0]" />
      <div className="ml-[27px] h-[2px] w-[10px] bg-[#999]" />
      <div className="ml-[13px] h-[18px] w-[5px] border border-[#aaa] bg-[#f0f0f0]" />
      <div className="mr-[8px] h-px flex-1 bg-[#aaa]" />
    </div>
  );
}

export default function App() {
  return (
    <div className="flex h-[962px] w-[1653px] flex-col overflow-hidden bg-[#f0f0f0] font-['Noto_Sans','Noto_Sans_CJK_SC',sans-serif]">
      <TitleBar />
      <Ribbon />
      <Breadcrumb />
      <div className="flex min-h-0 flex-1 pt-[3px]">
        <Browser />
        <div className="w-[6px] shrink-0 border-l border-[#cfcfcf] bg-[#e6e6e6]" />
        <DiagramPane />
        <div className="w-[7px] shrink-0 bg-[#dcdcdc]" />
        <Properties />
      </div>
      <StatusBar />
    </div>
  );
}
